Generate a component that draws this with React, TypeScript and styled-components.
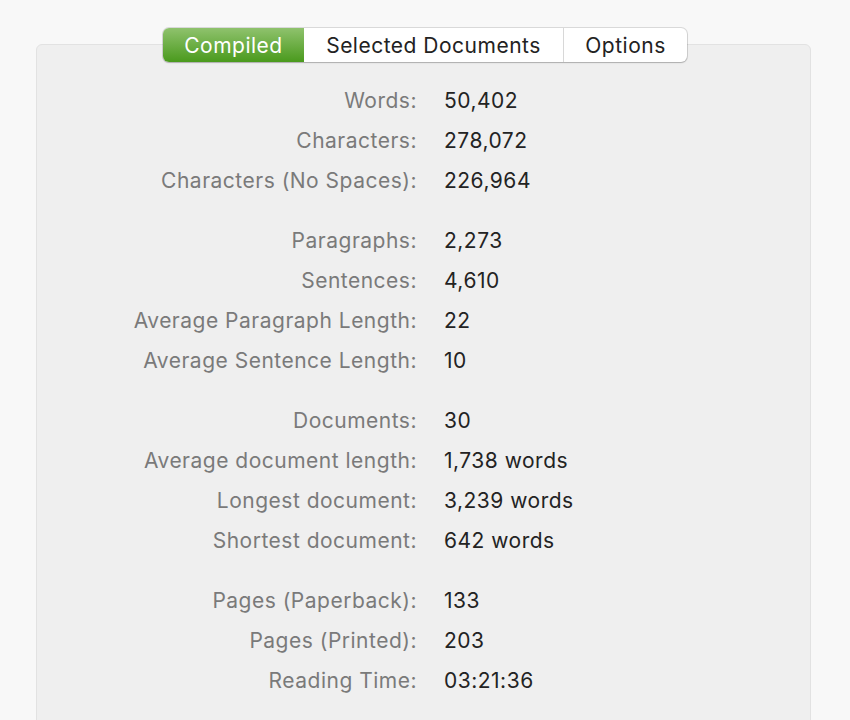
import React from "react";
import styled, { createGlobalStyle } from "styled-components";

const Global = createGlobalStyle`
  html, body { margin: 0; padding: 0; background: #f8f8f8; }
  body { font-family: Inter, "Liberation Sans", sans-serif; -webkit-font-smoothing: antialiased; }
`;

const Page = styled.div`
  padding: 44px 39px 0 36px;
  height: 720px;
  box-sizing: border-box;
  overflow: hidden;
`;

const Panel = styled.div`
  background: #efefef;
  border: 1px solid #e2e2e2;
  border-radius: 6px;
  height: 720px;
  display: flex;
  flex-direction: column;
  align-items: center;
`;

const TabBar = styled.div`
  margin-top: -17px;
  margin-left: 3px;
  display: flex;
  height: 34px;
  background: #fff;
  border-radius: 6px;
  box-shadow: 0 0 0 1px rgba(0,0,0,0.12), 0 1px 1.5px rgba(0,0,0,0.18);
  overflow: hidden;
`;

const Tab = styled.div<{ $active?: boolean; $w: number; $divider?: boolean }>`
  width: ${p => p.$w}px;
  display: flex;
  align-items: center;
  justify-content: center;
  font-size: 21px;
  letter-spacing: 0.5px;
  color: ${p => (p.$active ? "#fff" : "#222")};
  background: ${p => (p.$active ? "linear-gradient(#8fc26d, #4a9a1d)" : "transparent")};
  border-left: ${p => (p.$divider ? "1px solid #d8d8d8" : "none")};
  box-sizing: border-box;
`;

const Stats = styled.div`
  align-self: stretch;
  padding-top: 19px;
  display: flex;
  flex-direction: column;
  gap: 20px;
`;

const Group = styled.div`
  display: grid;
  grid-template-columns: 380px 1fr;
  column-gap: 27px;
  grid-auto-rows: 40px;
`;

const Label = styled.div`
  text-align: right;
  color: #7a7a7a;
  font-size: 21px;
  letter-spacing: 0.5px;
  line-height: 40px;
`;

const Value = styled.div`
  color: #232323;
  font-size: 21px;
  letter-spacing: 0.5px;
  line-height: 40px;
`;

const groups: [string, string][][] = [
  [
    ["Words:", "50,402"],
    ["Characters:", "278,072"],
    ["Characters (No Spaces):", "226,964"],
  ],
  [
    ["Paragraphs:", "2,273"],
    ["Sentences:", "4,610"],
    ["Average Paragraph Length:", "22"],
    ["Average Sentence Length:", "10"],
  ],
  [
    ["Documents:", "30"],
    ["Average document length:", "1,738 words"],
    ["Longest document:", "3,239 words"],
    ["Shortest document:", "642 words"],
  ],
  [
    ["Pages (Paperback):", "133"],
    ["Pages (Printed):", "203"],
    ["Reading Time:", "03:21:36"],
  ],
];

export default function App() {
  return (
    <>
      <Global />
      <Page>
        <Panel>
          <TabBar>
            <Tab $active $w={141}>Compiled</Tab>
            <Tab $w={259}>Selected Documents</Tab>
            <Tab $w={124} $divider>Options</Tab>
          </TabBar>
          <Stats>
            {groups.map((g, i) => (
              <Group key={i}>
                {g.map(([l, v]) => (
                  <React.Fragment key={l}>
                    <Label>{l}</Label>
                    <Value>{v}</Value>
                  </React.Fragment>
                ))}
              </Group>
            ))}
          </Stats>
        </Panel>
      </Page>
    </>
  );
}
